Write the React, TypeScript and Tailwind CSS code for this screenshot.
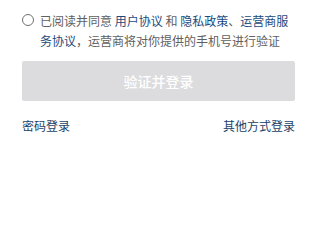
export default function App() {
  return (
    <div
      className="w-[320px] h-[240px] bg-white pl-[22px] pr-[25px] pt-[11px]"
      style={{ fontFamily: '"Noto Sans CJK SC", "Noto Sans", sans-serif' }}
    >
      <div className="flex gap-[6px]">
        <span className="mt-[3px] w-[12px] h-[12px] shrink-0 rounded-full border-[1.5px] border-[#707070]" />
        <p className="w-[252px] text-[12px] leading-[20px] text-[#606060]">
          已阅读并同意 <span className="text-[#1d4a7c]">用户协议</span> 和{' '}
          <span className="text-[#1d4a7c]">隐私政策</span>、
          <span className="text-[#1d4a7c]">运营商服务协议</span>，运营商将对你提供的手机号进行验证
        </p>
      </div>

      <button className="mt-[10px] w-full h-[40px] rounded-[2px] bg-[#dcdcde] text-white text-[14px] font-medium">
        验证并登录
      </button>

      <div className="mt-[16px] flex justify-between text-[12px] text-[#1d3f66]">
        <span>密码登录</span>
        <span>其他方式登录</span>
      </div>
    </div>
  );
}
